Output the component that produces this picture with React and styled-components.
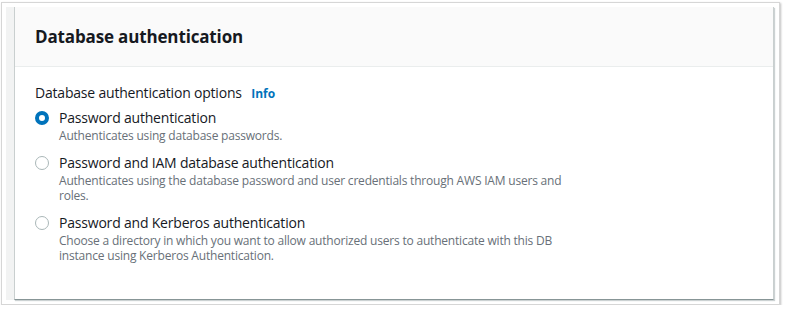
import styled, { createGlobalStyle } from "styled-components";

const GlobalStyle = createGlobalStyle`
  body {
    margin: 0;
    background: #ffffff;
    font-family: "Open Sans", "Noto Sans", sans-serif;
  }
`;

const options = [
  {
    id: "password",
    label: "Password authentication",
    desc: "Authenticates using database passwords.",
    checked: true,
  },
  {
    id: "iam",
    label: "Password and IAM database authentication",
    desc: "Authenticates using the database password and user credentials through AWS IAM users and roles.",
  },
  {
    id: "kerberos",
    label: "Password and Kerberos authentication",
    desc: "Choose a directory in which you want to allow authorized users to authenticate with this DB instance using Kerberos Authentication.",
  },
];

function App() {
  return (
    <>
      <GlobalStyle />
      <Frame>
        <Gutter />
        <Card>
          <Header>
            <Title>Database authentication</Title>
          </Header>
          <Body>
            <FieldLabel>
              Database authentication options <Info>Info</Info>
            </FieldLabel>
            <OptionList>
              {options.map((opt) => (
                <Option key={opt.id}>
                  <Radio checked={opt.checked} />
                  <OptionText>
                    <OptionLabel>{opt.label}</OptionLabel>
                    <OptionDesc>{opt.desc}</OptionDesc>
                  </OptionText>
                </Option>
              ))}
            </OptionList>
          </Body>
        </Card>
      </Frame>
    </>
  );
}

export default App;

const Frame = styled.div`
  display: flex;
  width: 779px;
  height: 303px;
  margin: 2px 0 0 1px;
  padding: 4px 5px 4px 4px;
  box-sizing: border-box;
  border: 1px solid #d6d6d6;
  background: #ffffff;
  box-shadow: 1px 1px 2px rgba(0, 0, 0, 0.25);
`;

const Gutter = styled.div`
  width: 8px;
  flex: none;
  background: #f2f3f3;
`;

const Card = styled.section`
  flex: 1;
  display: flex;
  flex-direction: column;
  background: #ffffff;
  border-left: 1px solid #c9cfcf;
  border-right: 1px solid #c9cfcf;
  border-bottom: 1px solid #879596;
  box-shadow: 1px 1px 1px rgba(0, 28, 36, 0.2);
`;

const Header = styled.header`
  height: 59px;
  display: flex;
  align-items: center;
  padding: 0 20px;
  background: #fafafa;
  border-bottom: 1px solid #eaeded;
`;

const Title = styled.h2`
  margin: 0;
  font-size: 17px;
  font-weight: 700;
  letter-spacing: -0.15px;
  color: #16191f;
  line-height: 22px;
`;

const Body = styled.div`
  padding: 15px 20px 0;
`;

const FieldLabel = styled.div`
  font-size: 14px;
  line-height: 22px;
  letter-spacing: -0.2px;
  color: #16191f;
`;

const Info = styled.span`
  margin-left: 6px;
  font-size: 12px;
  font-weight: 700;
  letter-spacing: 0;
  color: #0073bb;
`;

const OptionList = styled.div`
  display: flex;
  flex-direction: column;
  gap: 10px;
  margin-top: 3px;
`;

const Option = styled.div`
  display: flex;
  gap: 10px;
`;

const Radio = styled.span`
  flex: none;
  width: 14px;
  height: 14px;
  margin-top: 3px;
  border-radius: 50%;
  box-sizing: border-box;
  background: #ffffff;
  border: ${(p) => (p.checked ? "4px solid #0073bb" : "1px solid #aab7b8")};
`;

const OptionText = styled.div`
  display: flex;
  flex-direction: column;
  max-width: 510px;
`;

const OptionLabel = styled.div`
  font-size: 14px;
  line-height: 20px;
  letter-spacing: -0.2px;
  color: #16191f;
`;

const OptionDesc = styled.div`
  font-size: 12px;
  line-height: 15px;
  letter-spacing: -0.2px;
  color: #687078;
`;
